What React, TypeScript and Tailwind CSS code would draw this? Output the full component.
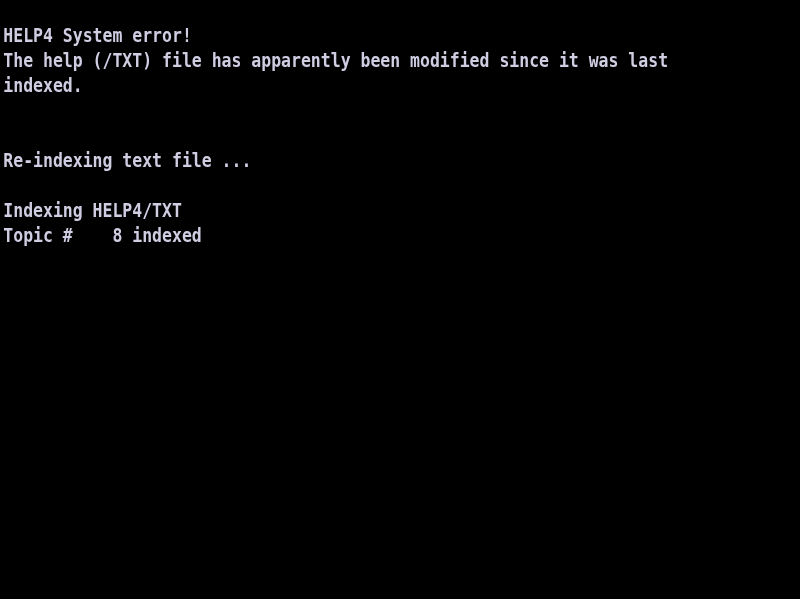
const LINES = [
  "",
  "HELP4 System error!",
  "The help (/TXT) file has apparently been modified since it was last",
  "indexed.",
  "",
  "",
  "Re-indexing text file ...",
  "",
  "Indexing HELP4/TXT",
  "Topic #    8 indexed",
];

export default function App() {
  return (
    <div className="w-[800px] h-[599px] bg-black overflow-hidden">
      <div
        className="origin-top-left scale-x-[0.824] -mt-[2px] pl-[4px] text-[20px] leading-[25px] font-bold text-[#cfcde2] whitespace-pre blur-[0.5px]"
        style={{ fontFamily: '"DejaVu Sans Mono", "Liberation Mono", monospace' }}
      >
        {LINES.map((line, i) => (
          <div key={i} className="h-[25px]">
            {line}
          </div>
        ))}
      </div>
    </div>
  );
}
